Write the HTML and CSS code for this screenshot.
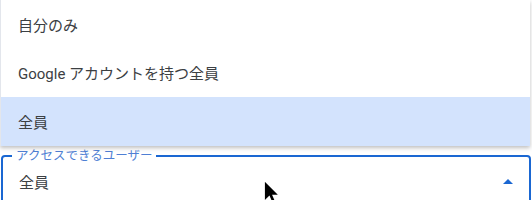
FILE: index.html
```html
<!DOCTYPE html>
<html lang="ja">
<head>
    <meta charset="UTF-8">
    <title>アクセス設定</title>
    <link rel="stylesheet" href="styles.css">
</head>
<body>

<div class="container">
    <ul class="menu">
        <li class="menu-item">自分のみ</li>
        <li class="menu-item">Google アカウントを持つ全員</li>
        <li class="menu-item selected">全員</li>
    </ul>

    <fieldset class="select-field">
        <legend>アクセスできるユーザー</legend>
        <div class="select-row">
            <span class="value">全員</span>
            <span class="arrow"></span>
        </div>
    </fieldset>

    <svg class="cursor" width="20" height="30" viewBox="0 0 16 24">
        <path d="M1 1 L1 18 L5 14 L8 21 L11 20 L8 13 L13 13 Z" fill="#000" stroke="#fff" stroke-width="1"/>
    </svg>
</div>

</body>
</html>
```

FILE: styles.css
```css
* {
    box-sizing: border-box;
    margin: 0;
    padding: 0;
}

body {
    background-color: #fff;
    font-family: Roboto, "Noto Sans CJK JP", sans-serif;
    color: #3c4043;
}

.container {
    position: relative;
    width: 532px;
    height: 200px;
    overflow: hidden;
}

.menu {
    list-style: none;
    width: 530px;
    background: #fff;
    border-left: 1px solid #e3e6ec;
    box-shadow: 0 2px 4px rgba(0, 0, 0, 0.25);
    position: relative;
    z-index: 2;
}

.menu-item {
    height: 48.5px;
    display: flex;
    align-items: center;
    padding-left: 17px;
    font-size: 15px;
}

.menu-item.selected {
    background-color: #d3e3fd;
}

.select-field {
    margin: 3px 0 0 1px;
    width: 530px;
    height: 70px;
    border: 2px solid #1a67d2;
    border-radius: 4px;
    padding: 0 16px;
}

.select-field legend {
    margin-left: -7px;
    padding: 0 4px;
    font-size: 12.5px;
    line-height: 14px;
    color: #4f7fd4;
}

.select-row {
    display: flex;
    align-items: center;
    justify-content: space-between;
    height: 30px;
    margin-top: 4px;
}

.value {
    font-size: 15px;
}

.arrow {
    width: 0;
    height: 0;
    border-left: 5px solid transparent;
    border-right: 5px solid transparent;
    border-bottom: 5px solid #1a67d2;
}

.cursor {
    position: absolute;
    left: 263px;
    top: 179px;
    z-index: 3;
}
```
